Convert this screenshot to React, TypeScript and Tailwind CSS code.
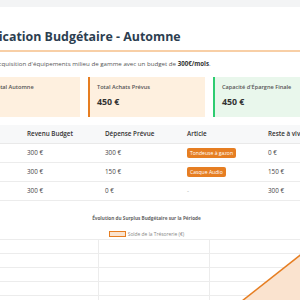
const rows = [
  { mois: 'Septembre', revenu: '300 €', depense: '300 €', article: 'Tondeuse à gazon', reste: '0 €' },
  { mois: 'Octobre', revenu: '300 €', depense: '150 €', article: 'Casque Audio', reste: '150 €' },
  { mois: 'Novembre', revenu: '300 €', depense: '0 €', article: null, reste: '300 €' },
]

function SurplusChart() {
  // grid + area of the cumulative balance, in chart coords
  const hLines = [0.5, 14.5, 28.5, 42.5, 56.5, 70.5]
  const vLines = [24, 135, 246, 357]
  return (
    <svg width="367" height="70" className="block">
      {hLines.map((y) => (
        <line key={y} x1="18" x2="357" y1={y} y2={y} stroke="#ececec" strokeWidth="1" />
      ))}
      {vLines.map((x) => (
        <line key={x} x1={x + 0.5} x2={x + 0.5} y1="0" y2="70" stroke="#ececec" strokeWidth="1" />
      ))}
      <polygon points="246,88 357,0.5 357,120 246,120" fill="#fae3cf" />
      <polyline points="246,88 357,0.5" fill="none" stroke="#e67e22" strokeWidth="1.5" />
    </svg>
  )
}

export default function App() {
  return (
    <div
      className="h-[300px] w-[300px] overflow-hidden bg-[#f3f4f5] pt-[7px]"
      style={{ fontFamily: '"Open Sans", "Noto Sans", sans-serif' }}
    >
      <div className="ml-[-57px] w-[407px] bg-white px-[20px] pt-[22px] pb-4">
        <h1 className="border-b-2 border-[#f8cfa6] pb-[5px] text-[12.4px] leading-[16px] font-bold text-[#2c3e50]">
          Planification Budgétaire - Automne
        </h1>
        <p className="mt-[7px] text-[6.15px] leading-[10px] text-[#555]">
          Stratégie d'acquisition d'équipements milieu de gamme avec un budget de{' '}
          <strong className="text-[#333]">300€/mois</strong>.
        </p>

        <div className="mt-[8px] grid grid-cols-3 gap-2">
          <div className="bg-[#fef0df] pt-[6px] pb-[9px] pl-[9px]">
            <div className="text-[5.6px] leading-[8px] font-semibold text-[#555]">Revenu Total Automne</div>
            <div className="mt-[5px] text-[8.8px] leading-[12px] font-bold text-[#333]">900 €</div>
          </div>
          <div className="border-l-[2.5px] border-[#e67e22] bg-[#fef0df] pt-[6px] pb-[9px] pl-[7px]">
            <div className="text-[5.6px] leading-[8px] font-semibold text-[#555]">Total Achats Prévus</div>
            <div className="mt-[5px] text-[8.8px] leading-[12px] font-bold text-[#333]">450 €</div>
          </div>
          <div className="border-l-[2.5px] border-[#2ecc71] bg-[#e9f7ec] pt-[6px] pb-[9px] pl-[7px]">
            <div className="text-[5.6px] leading-[8px] font-semibold text-[#555]">Capacité d'Épargne Finale</div>
            <div className="mt-[5px] text-[8.8px] leading-[12px] font-bold text-[#333]">450 €</div>
          </div>
        </div>

        <table className="mt-[8px] w-[367px] table-fixed border-collapse text-left">
          <colgroup>
            <col className="w-[56px]" />
            <col className="w-[78px]" />
            <col className="w-[82px]" />
            <col className="w-[81px]" />
            <col className="w-[70px]" />
          </colgroup>
          <thead>
            <tr className="h-[18px] border-b border-[#e9e9e9] bg-[#f7f8f9]">
              {['Mois', 'Revenu Budget', 'Dépense Prévue', 'Article', 'Reste à vivre'].map((h, i) => (
                <th
                  key={h}
                  className={`${i === 0 ? 'pl-[2px]' : 'pl-[8px]'} pr-[8px] text-[6.3px] leading-[9px] font-semibold whitespace-nowrap text-[#333]`}
                >
                  {h}
                </th>
              ))}
            </tr>
          </thead>
          <tbody>
            {rows.map((r) => (
              <tr key={r.mois} className="h-[19px] border-b border-[#ececec] text-[6.3px] text-[#444]">
                <td className="pl-[2px] whitespace-nowrap">{r.mois}</td>
                <td className="px-[8px]">{r.revenu}</td>
                <td className="px-[8px]">{r.depense}</td>
                <td className="px-[8px]">
                  {r.article ? (
                    <span className="inline-block rounded-[2px] bg-[#e67e22] px-[3px] text-[5.1px] leading-[10px] whitespace-nowrap text-white">
                      {r.article}
                    </span>
                  ) : (
                    <span className="text-[#bbb]">-</span>
                  )}
                </td>
                <td className="px-[8px]">{r.reste}</td>
              </tr>
            ))}
          </tbody>
        </table>

        <div className="mt-[14px] text-center text-[4.7px] leading-[7px] font-bold text-[#666]">
          Évolution du Surplus Budgétaire sur la Période
        </div>
        <div className="mt-[8px] flex h-[8px] items-center justify-center gap-[2px]">
          <span className="h-[6px] w-[17px] border-[1.5px] border-[#e67e22] bg-[#fae3cf]" />
          <span className="text-[4.9px] leading-[8px] text-[#888]">Solde de la Trésorerie (€)</span>
        </div>
        <div className="mt-[1px]">
          <SurplusChart />
        </div>
      </div>
    </div>
  )
}
